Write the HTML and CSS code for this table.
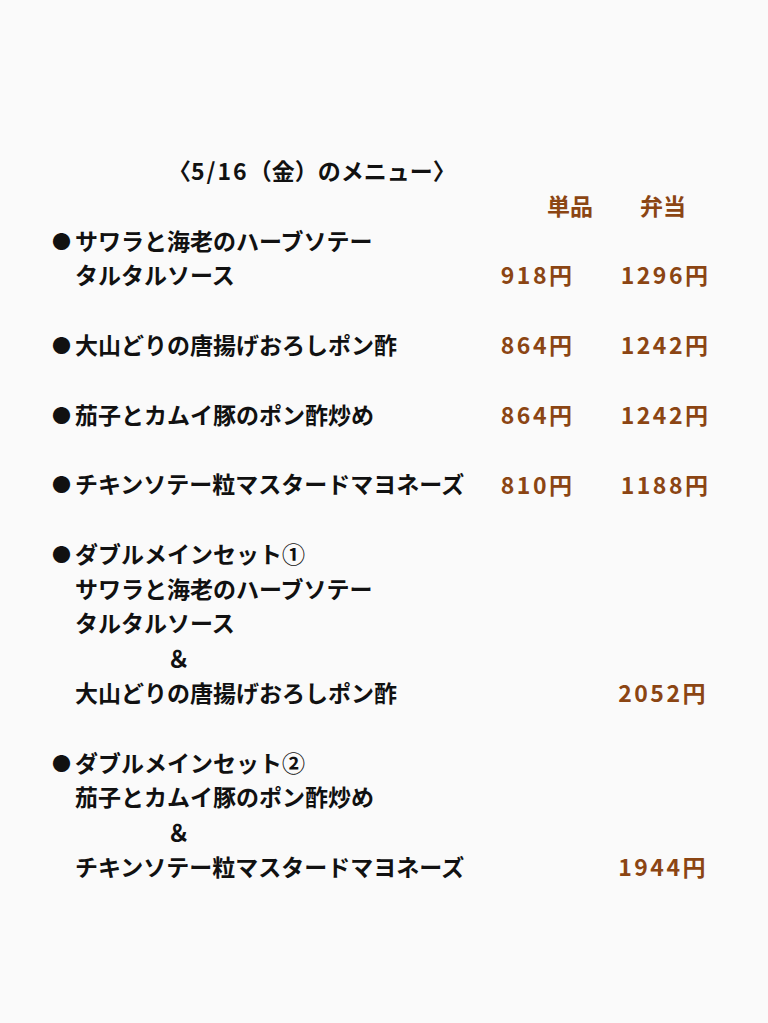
FILE: index.html
```html
<!DOCTYPE html>
<html lang="ja">
<head>
<meta charset="utf-8">
<link rel="stylesheet" href="styles.css">
</head>
<body>
<main class="menu">
  <h1 class="title">〈<span class="num">5/16</span>（金）のメニュー〉</h1>
  <div class="line head"><span></span><span class="p1 h1c">単品</span><span class="p2 h2c">弁当</span></div>

  <section class="item">
    <div class="line"><span class="name"><span class="dot">●</span>サワラと海老のハーブソテー</span></div>
    <div class="line"><span class="name indent">タルタルソース</span><span class="p1">918円</span><span class="p2">1296円</span></div>
  </section>

  <section class="item">
    <div class="line"><span class="name"><span class="dot">●</span>大山どりの唐揚げおろしポン酢</span><span class="p1">864円</span><span class="p2">1242円</span></div>
  </section>

  <section class="item">
    <div class="line"><span class="name"><span class="dot">●</span>茄子とカムイ豚のポン酢炒め</span><span class="p1">864円</span><span class="p2">1242円</span></div>
  </section>

  <section class="item">
    <div class="line"><span class="name"><span class="dot">●</span>チキンソテー粒マスタードマヨネーズ</span><span class="p1">810円</span><span class="p2">1188円</span></div>
  </section>

  <section class="item">
    <div class="line"><span class="name"><span class="dot">●</span>ダブルメインセット①</span></div>
    <div class="line"><span class="name indent">サワラと海老のハーブソテー</span></div>
    <div class="line"><span class="name indent">タルタルソース</span></div>
    <div class="line"><span class="name indent amp">＆</span></div>
    <div class="line"><span class="name indent">大山どりの唐揚げおろしポン酢</span><span class="p1"></span><span class="p2 set">2052円</span></div>
  </section>

  <section class="item">
    <div class="line"><span class="name"><span class="dot">●</span>ダブルメインセット②</span></div>
    <div class="line"><span class="name indent">茄子とカムイ豚のポン酢炒め</span></div>
    <div class="line"><span class="name indent amp">＆</span></div>
    <div class="line"><span class="name indent">チキンソテー粒マスタードマヨネーズ</span><span class="p1"></span><span class="p2 set">1944円</span></div>
  </section>
</main>
</body>
</html>
```
FILE: styles.css
```css
html, body {
  margin: 0;
  padding: 0;
  background: #fafafa;
}
body {
  font-family: "Noto Sans CJK JP", "Noto Sans", sans-serif;
  font-weight: 700;
  font-size: 23px;
  color: #111;
}
.menu {
  padding: 153px 60px 0 52px;
  line-height: 34.8px;
}
.title {
  margin: 0;
  font-size: 23px;
  font-weight: 700;
  line-height: 34.8px;
  padding-left: 116px;
}
.title .num {
  letter-spacing: 2px;
}
.line {
  display: grid;
  grid-template-columns: 1fr 100px 136px;
  height: 34.8px;
  align-items: center;
  white-space: nowrap;
}
.item {
  margin-bottom: 34.8px;
}
.dot {
  display: inline-block;
  width: 23px;
  font-size: 19px;
  vertical-align: 1px;
}
.indent {
  padding-left: 23px;
}
.amp {
  padding-left: 115px;
}
.p1, .p2 {
  text-align: right;
  color: #8b4513;
  letter-spacing: 2.5px;
  margin-right: -2.5px;
}
.head .h1c {
  margin-right: -21px;
  letter-spacing: 0;
}
.head .h2c {
  margin-right: 22px;
  letter-spacing: 0;
}
.set {
  margin-right: 0;
}
```
